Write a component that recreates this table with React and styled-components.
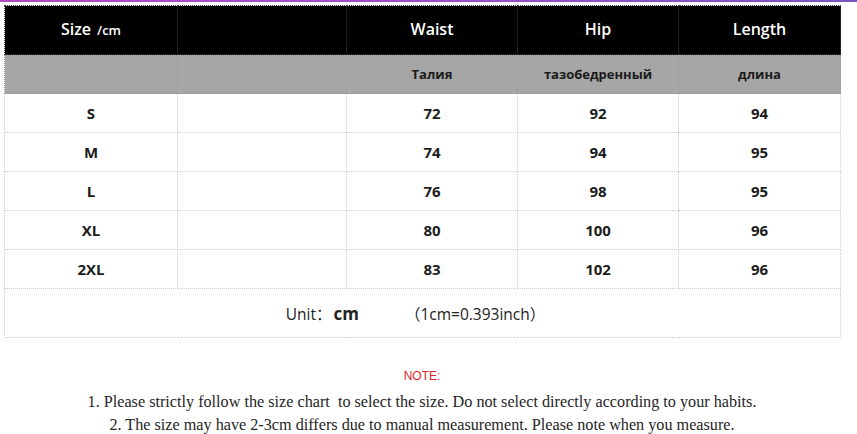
import styled, { createGlobalStyle } from "styled-components";

const GlobalStyle = createGlobalStyle`
  html, body {
    margin: 0;
    padding: 0;
    background: #ffffff;
  }
  body {
    font-family: "Open Sans", "Liberation Sans", sans-serif;
  }
`;

const Page = styled.div`
  width: 857px;
  height: 434px;
  overflow: hidden;
  background: #fff;
`;

const TopStrip = styled.div`
  height: 2px;
  background: linear-gradient(90deg, #b24ec4 0%, #9650c8 60%, #7a55c6 100%);
`;

const Sheet = styled.div`
  padding: 3px 17px 0 4px;
`;

const Chart = styled.table`
  width: 836px;
  border-collapse: collapse;
  table-layout: fixed;
`;

const Cell = styled.td`
  border: 1px dotted #cfcfcf;
  text-align: center;
  padding: 0;
  height: ${(p) => p.$h || 38}px;
  font-weight: 700;
  font-size: 15px;
  color: #1c1c1c;
  background: #fff;
`;

const HeadCell = styled(Cell)`
  background: #000;
  color: #fff;
  font-size: 16px;
  font-weight: 600;
  border-color: #3a3a3a;
  padding-bottom: 3px;
`;

const SubCell = styled(Cell)`
  background: #a6a6a6;
  font-size: 13px;
  font-weight: 700;
  color: #1a1a1a;
  border-color: #9a9a9a;
`;

const Small = styled.span`
  font-size: 13px;
  margin-left: 6px;
`;

const UnitCell = styled(Cell)`
  font-weight: 400;
  font-size: 15.5px;
  color: #222;
  padding-right: 14px;
`;

const UnitBold = styled.b`
  font-size: 17px;
  font-weight: 700;
  margin: 0 46px 0 2px;
`;

const Paren = styled.span`
  font-family: "Noto Sans CJK SC", sans-serif;
`;

const Notes = styled.div`
  width: 836px;
  margin-top: 30px;
  text-align: center;
`;

const NoteTitle = styled.div`
  color: #e0252b;
  font-family: "Liberation Sans", Arial, sans-serif;
  font-size: 12px;
  line-height: 16px;
  margin-bottom: 7px;
`;

const NoteLine = styled.div`
  font-family: "Liberation Serif", "Times New Roman", serif;
  font-size: 16.2px;
  line-height: 23px;
  color: #262626;
`;

const widths = [173, 169, 171, 161, 162];

const rows = [
  ["S", "72", "92", "94"],
  ["M", "74", "94", "95"],
  ["L", "76", "98", "95"],
  ["XL", "80", "100", "96"],
  ["2XL", "83", "102", "96"],
];

export default function App() {
  return (
    <Page>
      <GlobalStyle />
      <TopStrip />
      <Sheet>
        <Chart>
          <colgroup>
            {widths.map((w, i) => (
              <col key={i} style={{ width: w }} />
            ))}
          </colgroup>
          <tbody>
            <tr>
              <HeadCell $h={45}>
                Size<Small>/cm</Small>
              </HeadCell>
              <HeadCell $h={45} />
              <HeadCell $h={45}>Waist</HeadCell>
              <HeadCell $h={45}>Hip</HeadCell>
              <HeadCell $h={45}>Length</HeadCell>
            </tr>
            <tr>
              <SubCell />
              <SubCell />
              <SubCell>Талия</SubCell>
              <SubCell>тазобедренный</SubCell>
              <SubCell>длина</SubCell>
            </tr>
            {rows.map((r) => (
              <tr key={r[0]}>
                <Cell>{r[0]}</Cell>
                <Cell />
                <Cell>{r[1]}</Cell>
                <Cell>{r[2]}</Cell>
                <Cell>{r[3]}</Cell>
              </tr>
            ))}
            <tr>
              <UnitCell colSpan={5} $h={48}>
                Unit<Paren>：</Paren>
                <UnitBold>cm</UnitBold>
                <Paren>（</Paren>1cm=0.393inch<Paren>）</Paren>
              </UnitCell>
            </tr>
          </tbody>
        </Chart>
        <Notes>
          <NoteTitle>NOTE:</NoteTitle>
          <NoteLine>
            1. Please strictly follow the size chart&nbsp; to select the size. Do not select directly according to your habits.
          </NoteLine>
          <NoteLine>
            2. The size may have 2-3cm differs due to manual measurement. Please note when you measure.
          </NoteLine>
        </Notes>
      </Sheet>
    </Page>
  );
}
